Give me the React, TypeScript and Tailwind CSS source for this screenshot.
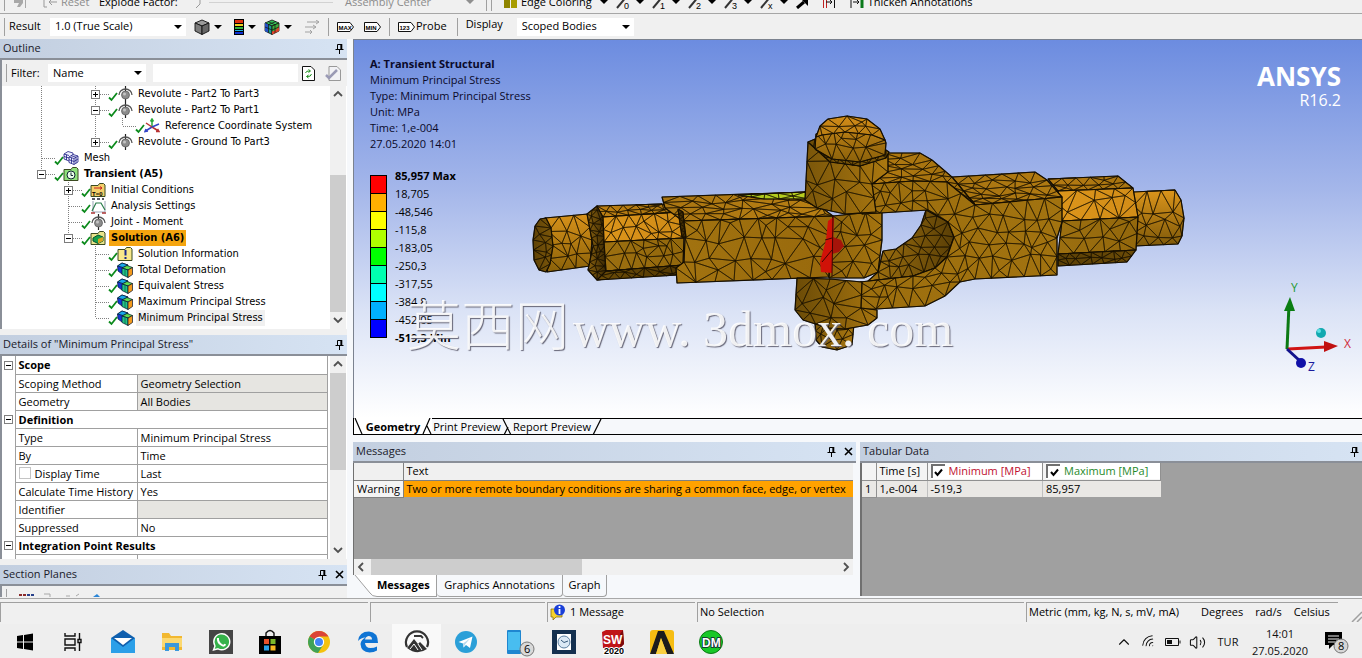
import type { ReactNode } from 'react';
import { ChevronUp, Volume2, Wifi } from 'lucide-react';

type Pt = [number, number];

interface Face {
  pts: Pt[];
  from: string;
  to: string;
  vertical?: boolean;
  step: number;
  flat?: number;
}

// ---------- mesh drawing ----------

function makeRandom(seed: number) {
  let s = seed;
  return () => {
    s = (s * 1664525 + 1013904223) % 4294967296;
    return s / 4294967296;
  };
}

function inside([x, y]: Pt, poly: Pt[]) {
  let hit = false;
  for (let i = 0, j = poly.length - 1; i < poly.length; j = i++) {
    const [xi, yi] = poly[i];
    const [xj, yj] = poly[j];
    if (yi > y !== yj > y && x < ((xj - xi) * (y - yi)) / (yj - yi) + xi) hit = !hit;
  }
  return hit;
}

function triangulate(points: Pt[]) {
  const all: Pt[] = [...points, [-9000, -9000], [9000, -9000], [0, 12000]];
  const n = points.length;
  let tris: number[][] = [[n, n + 1, n + 2]];
  const inCircle = (t: number[], p: Pt) => {
    const [a, b, c] = t.map((i) => all[i]);
    const d = 2 * (a[0] * (b[1] - c[1]) + b[0] * (c[1] - a[1]) + c[0] * (a[1] - b[1]));
    if (Math.abs(d) < 1e-9) return false;
    const a2 = a[0] ** 2 + a[1] ** 2;
    const b2 = b[0] ** 2 + b[1] ** 2;
    const c2 = c[0] ** 2 + c[1] ** 2;
    const ux = (a2 * (b[1] - c[1]) + b2 * (c[1] - a[1]) + c2 * (a[1] - b[1])) / d;
    const uy = (a2 * (c[0] - b[0]) + b2 * (a[0] - c[0]) + c2 * (b[0] - a[0])) / d;
    return Math.hypot(p[0] - ux, p[1] - uy) < Math.hypot(a[0] - ux, a[1] - uy);
  };
  for (let i = 0; i < n; i++) {
    const bad = tris.filter((t) => inCircle(t, all[i]));
    const edges = new Map<string, number[]>();
    bad.forEach((t) =>
      [[t[0], t[1]], [t[1], t[2]], [t[2], t[0]]].forEach((e) => {
        const key = `${Math.min(e[0], e[1])}-${Math.max(e[0], e[1])}`;
        if (edges.has(key)) edges.delete(key);
        else edges.set(key, e);
      }),
    );
    tris = tris.filter((t) => !bad.includes(t));
    edges.forEach((e) => tris.push([e[0], e[1], i]));
  }
  return tris.filter((t) => t.every((i) => i < n));
}

function meshPath(face: Face, seed: number) {
  const rnd = makeRandom(seed * 977 + 31);
  const k = face.flat ?? 1;
  const poly = face.pts.map(([x, y]) => [x - 850, (y - 230) * k] as Pt);
  const step = face.step;
  const pts: Pt[] = [];
  poly.forEach((a, i) => {
    const b = poly[(i + 1) % poly.length];
    const parts = Math.max(1, Math.round(Math.hypot(b[0] - a[0], b[1] - a[1]) / step));
    for (let q = 0; q < parts; q++) {
      const t = q / parts;
      pts.push([a[0] + (b[0] - a[0]) * t + rnd() * 0.02, a[1] + (b[1] - a[1]) * t + rnd() * 0.02]);
    }
  });
  const xs = poly.map((p) => p[0]);
  const ys = poly.map((p) => p[1]);
  const edgeCount = pts.length;
  let row = 0;
  for (let y = Math.min(...ys) + step / 2; y < Math.max(...ys); y += step * 0.87, row++) {
    for (let x = Math.min(...xs) + (row % 2) * step * 0.5; x < Math.max(...xs); x += step) {
      const p: Pt = [x + (rnd() - 0.5) * step * 0.6, y + (rnd() - 0.5) * step * 0.6];
      const clear = pts.slice(0, edgeCount).every((e) => Math.hypot(e[0] - p[0], e[1] - p[1]) > step * 0.5);
      if (clear && inside(p, poly)) pts.push(p);
    }
  }
  return triangulate(pts)
    .filter((t) => inside([(pts[t[0]][0] + pts[t[1]][0] + pts[t[2]][0]) / 3, (pts[t[0]][1] + pts[t[1]][1] + pts[t[2]][1]) / 3], poly))
    .map((t) => `M${t.map((i) => `${(pts[i][0] + 850).toFixed(1)} ${(pts[i][1] / k + 230).toFixed(1)}`).join('L')}Z`)
    .join('');
}

const faces: Face[] = [
  // left shaft
  { pts: [[545, 218], [588, 214], [592, 240], [590, 266], [547, 272], [552, 245]], from: '#d8921a', to: '#8a6109', vertical: true, step: 14 },
  { pts: [[540, 219], [546, 218], [551, 228], [553, 246], [550, 264], [546, 272], [539, 270], [534, 260], [533, 240], [535, 226]], from: '#5e4207', to: '#7c570a', step: 10 },
  { pts: [[587, 214], [597, 206], [604, 214], [606, 244], [606, 279], [597, 280], [588, 270], [593, 246]], from: '#8d6410', to: '#3a2803', step: 8 },
  { pts: [[597, 206], [662, 204], [680, 212], [603, 217]], from: '#bd7f13', to: '#a87410', step: 12, flat: 2.4 },
  { pts: [[603, 217], [680, 212], [684, 238], [604, 242]], from: '#dc951b', to: '#cf8b17', step: 13 },
  { pts: [[604, 242], [684, 238], [683, 265], [606, 271]], from: '#9c6f10', to: '#93680c', step: 13 },
  { pts: [[606, 271], [683, 265], [678, 275], [597, 280]], from: '#6b4b07', to: '#513804', step: 12, flat: 2 },
  { pts: [[662, 197], [805, 192], [822, 208], [833, 216], [683, 221], [665, 208]], from: '#a97512', to: '#b98014', step: 19, flat: 2.6 },
  { pts: [[738, 195], [805, 192], [809, 199], [764, 199]], from: '#a9c51c', to: '#b9cf20', step: 14, flat: 2.4 },
  { pts: [[683, 221], [833, 216], [829, 277], [677, 283], [676, 268], [684, 262], [685, 238]], from: '#a27310', to: '#98690c', step: 19 },
  { pts: [[678, 209], [683, 212], [684, 222], [686, 237], [682, 237], [680, 224]], from: '#4a3403', to: '#3b2804', step: 6 },
  // right shaft
  { pts: [[1133, 192], [1175, 190], [1181, 200], [1184, 218], [1182, 236], [1178, 244], [1135, 246]], from: '#dc951b', to: '#7e590a', vertical: true, step: 15 },
  { pts: [[1048, 179], [1118, 176], [1133, 188], [1058, 191]], from: '#b57b13', to: '#a77310', step: 14, flat: 2.4 },
  { pts: [[1058, 191], [1133, 188], [1138, 217], [1062, 221]], from: '#dc951b', to: '#d28d18', step: 17 },
  { pts: [[1062, 221], [1138, 217], [1136, 250], [1058, 254]], from: '#9c6f10', to: '#93680c', step: 17 },
  { pts: [[1058, 254], [1136, 250], [1127, 262], [1058, 266]], from: '#5b4006', to: '#6b4b07', step: 12, flat: 2 },
  { pts: [[952, 177], [1035, 172], [1047, 180], [1062, 197], [975, 205]], from: '#a97512', to: '#b07a12', step: 17, flat: 2.4 },
  // fork
  { pts: [[833, 216], [882, 211], [882, 240], [878, 272], [864, 278], [829, 278]], from: '#8f650c', to: '#a5740f', step: 16 },
  { pts: [[926, 210], [948, 222], [954, 237], [947, 257], [935, 268], [913, 276], [868, 281], [878, 272], [883, 251], [896, 249], [912, 238], [921, 225]], from: '#a27310', to: '#5a3f06', step: 12 },
  { pts: [[884, 153], [920, 153], [932, 160], [952, 177], [975, 205], [947, 182], [913, 181], [873, 184], [886, 172]], from: '#b17a12', to: '#a06f0e', step: 16, flat: 2.2 },
  {
    pts: [[870, 184], [913, 181], [947, 182], [975, 205], [1062, 197], [1062, 222], [1057, 238], [1057, 275], [975, 279], [960, 282], [945, 296], [925, 306], [860, 310],
      [860, 282], [913, 276], [935, 268], [947, 257], [954, 237], [948, 222], [928, 210], [880, 213], [862, 214]],
    from: '#9c6e0e', to: '#a27310', step: 16,
  },
  // bosses
  { pts: [[815, 322], [854, 324], [852, 345], [837, 350], [822, 347], [816, 340]], from: '#7e590a', to: '#a87711', step: 11 },
  { pts: [[797, 278], [830, 279], [862, 282], [861, 308], [877, 310], [877, 318], [868, 325], [845, 329], [828, 328], [803, 320], [795, 310]], from: '#6b4b07', to: '#a5740f', step: 17 },
  { pts: [[808, 142], [830, 161], [860, 166], [888, 155], [888, 172], [872, 184], [876, 212], [845, 214], [817, 208], [805, 200]], from: '#7a560a', to: '#ab7810', step: 17 },
  { pts: [[808, 142], [815, 139], [816, 150], [832, 158], [860, 161], [886, 150], [889, 152], [886, 158], [860, 166], [830, 162]], from: '#6b4b07', to: '#7e590a', step: 8 },
  { pts: [[816, 134], [822, 132], [845, 129], [872, 131], [885, 140], [886, 143], [885, 155], [860, 162], [832, 159], [815, 149]], from: '#b87d14', to: '#8c620b', vertical: true, step: 14 },
  { pts: [[828, 119], [847, 116], [867, 119], [880, 129], [885, 140], [872, 135], [845, 132], [822, 135], [816, 137], [820, 126]], from: '#d08b18', to: '#b57b13', vertical: true, step: 14, flat: 1.6 },
];

const faceOutline = (pts: Pt[]) => pts.map((p) => p.join(',')).join(' ');

function Model() {
  return (
    <svg viewBox="530 110 660 245" className="absolute left-[176px] top-[70px] h-[245px] w-[660px]" aria-label="Meshed universal joint">
      <defs>
        {faces.map((f, i) => (
          <linearGradient key={i} id={`face${i}`} x1="0" y1="0" x2={f.vertical ? 0 : 1} y2={f.vertical ? 1 : 0}>
            <stop offset="0" stopColor={f.from} />
            <stop offset="1" stopColor={f.to} />
          </linearGradient>
        ))}
      </defs>
      {faces.map((f, i) => (
        <g key={i} strokeLinejoin="round">
          <polygon points={faceOutline(f.pts)} fill={`url(#face${i})`} stroke="#120c00" strokeWidth="1.2" />
          <path d={meshPath(f, i + 1)} fill="none" stroke="#1a1100" strokeWidth="0.6" />
        </g>
      ))}
      <path d="M828 221 834 217 832 273 821 272 820 262 826 240Z" fill="#d01208" />
      <path d="M833 237 841 240 844 246 839 252 832 254Z" fill="#a5140a" />
      <path d="M833 216 832 276M825 240 832 238M822 262 832 250" stroke="#3a0602" strokeWidth="1" fill="none" />
    </svg>
  );
}

// ---------- small icons ----------

const Caret = () => (
  <svg viewBox="0 0 8 4" className="h-1 w-2 shrink-0">
    <path d="M0 0H8L4 4Z" fill="#000" />
  </svg>
);

const PinIcon = () => (
  <svg viewBox="0 0 9 11" className="h-[11px] w-[9px]" fill="none" stroke="#000">
    <path d="M2.5 6V1.5H6V6M0.5 6.5H8.5M4.5 7V11" />
    <path d="M6.5 1V6" strokeWidth="1.6" />
  </svg>
);

const CloseIcon = () => (
  <svg viewBox="0 0 9 9" className="h-[9px] w-[9px]" stroke="#000" strokeWidth="1.6">
    <path d="M1 1 8 8M8 1 1 8" />
  </svg>
);

function Arrow({ dir }: { dir: 'up' | 'down' | 'left' | 'right' }) {
  const d = { up: 'M1 6 5 2 9 6', down: 'M1 3 5 7 9 3', left: 'M6 1 2 5 6 9', right: 'M4 1 8 5 4 9' }[dir];
  return (
    <svg viewBox="0 0 10 10" className="h-2.5 w-2.5" fill="none" stroke="#505050" strokeWidth="1.8">
      <path d={d} />
    </svg>
  );
}

const Check = () => (
  <svg viewBox="0 0 8 16" className="h-4 w-2 overflow-visible" fill="none" stroke="#0c8a1c" strokeWidth="1.8">
    <path d="M0 11.5 2.5 14 8 7" />
  </svg>
);

function JointIcon() {
  return (
    <svg viewBox="0 0 16 16" className="h-4 w-4 overflow-visible">
      <path d="M8.500 0V16" stroke="#222" strokeWidth="1.2" />
      <path d="M2 9A6.500 6 0 0 1 15 9" fill="none" stroke="#555" strokeWidth="1.3" />
      <circle cx="8.500" cy="9" r="4" fill="#8c8c8c" stroke="#555" strokeWidth="0.7" />
      <circle cx="7.500" cy="8" r="1.500" fill="#c4c4c4" />
    </svg>
  );
}

function AxesIcon() {
  return (
    <svg viewBox="0 0 16 16" className="h-4 w-4" fill="none" strokeWidth="1.5">
      <path d="M8 9V1M6.500 3.500 8 1 9.500 3.500" stroke="#28a83c" />
      <path d="M8 9 1.500 13M4 13 1 13.500 2 11" stroke="#3346c8" />
      <path d="M8 9 14.500 13M12 13.500 15 13.500 13.500 11M8 9 2 5" stroke="#b83232" />
      <path d="M8 9 15 6" stroke="#3346c8" />
    </svg>
  );
}

function MeshIcon() {
  return (
    <svg viewBox="0 0 16 16" className="h-4 w-4" fill="#eef0ff" stroke="#1c1c84" strokeWidth="0.8">
      <path d="M1 4 5 1.500 10 3V9L6 11 1 9Z" />
      <path d="M6 7 10 4.500 15 6V12L11 14.500 6 12.500Z" />
      <path d="M6 7 11 8.500 15 6M11 8.500V14.500M8.500 7.700V13.500M6 9.700 11 11.500 15 9M8 5.700 13 7.200M1 4 6 5.500M3.500 4.700V10M1 6.500 6 8M13 7.300V13.200" fill="none" />
    </svg>
  );
}

function FolderIcon({ fill, children }: { fill: string; children: ReactNode }) {
  return (
    <svg viewBox="0 0 16 16" className="h-4 w-4">
      <path d="M1 3.500H8L9.500 1.500H13.500L15 3V14.500H1Z" fill={fill} stroke="#3b4a20" strokeWidth="1" />
      {children}
    </svg>
  );
}

function CurveIcon() {
  return (
    <svg viewBox="0 0 16 16" className="h-4 w-4" fill="none">
      <path d="M2 1H14" stroke="#223" strokeWidth="1.600" strokeDasharray="3 2" />
      <path d="M3 3V14H15M15 3V14" stroke="#9aa4b4" />
      <path d="M2 13 6 5H11L15 12" stroke="#2b7c4b" strokeWidth="1.200" />
      <path d="M1 15H5M12 15H16" stroke="#a33" strokeWidth="1.500" />
    </svg>
  );
}

function ResultIcon() {
  return (
    <svg viewBox="0 0 16 16" className="h-4 w-4" stroke="#06122e" strokeWidth="0.700">
      <path d="M0.500 4 5 1 11 3V9L5 12 1 9Z" fill="#1238d8" />
      <path d="M5 1 11 3 6 5.500 0.500 4Z" fill="#18a8e8" />
      <path d="M5 6 10 3.500 15.500 5.500 11 8Z" fill="#5fdc50" />
      <path d="M5 6 11 8V15.500L5 12.500Z" fill="#22c48a" />
      <path d="M11 8 15.500 5.500V12.500L11 15.500Z" fill="#f39a1c" />
      <path d="M8 7V14" stroke="#0a5a3a" />
    </svg>
  );
}

function CubeIcon({ colors }: { colors: [string, string, string] }) {
  return (
    <svg viewBox="0 0 16 16" className="h-4 w-4" stroke="#111" strokeWidth="0.900">
      <path d="M1 4 8 1 15 4 8 7Z" fill={colors[0]} />
      <path d="M1 4 8 7V15.500L1 12Z" fill={colors[1]} />
      <path d="M8 7 15 4V12L8 15.500Z" fill={colors[2]} />
    </svg>
  );
}

function ContourCubeIcon() {
  return (
    <svg viewBox="0 0 16 16" className="h-4 w-4" stroke="#111" strokeWidth="0.800">
      <path d="M1 4 8 1 15 4 8 7Z" fill="#35c25a" />
      <path d="M1 4 8 7V15.500L1 12Z" fill="#1b9a8e" />
      <path d="M8 7 15 4V12L8 15.500Z" fill="#3fae3a" />
      <path d="M15 7V12L8 15.500V12.500Q12 12 15 7Z" fill="#e0402a" stroke="none" />
      <path d="M1 4 4 5.500V13.500L1 12Z" fill="#2450c8" stroke="none" />
      <path d="M4 2.500 11 5.800V14M12 2.500 4.500 5.500V13.800M1 8 8 11 15 8" fill="none" strokeWidth="0.700" />
    </svg>
  );
}

function TagIcon({ text }: { text: string }) {
  return (
    <svg viewBox="0 0 17 10" className="h-2.5 w-[17px]">
      <path d="M0.500 0.500H13L16.500 5 13 9.500H0.500Z" fill="#fff" stroke="#111" />
      <text x="1.500" y="7.500" fontSize="6" fontFamily="Liberation Sans" fontWeight="bold">
        {text}
      </text>
    </svg>
  );
}

// ---------- tree ----------

type Guide = 'none' | 'line' | 'tee' | 'elbow' | 'plus' | 'plusEnd' | 'minus' | 'minusEnd';

function GuideCell({ kind }: { kind: Guide }) {
  const box = kind.startsWith('plus') || kind.startsWith('minus');
  const down = kind === 'line' || kind === 'tee' || kind === 'plus' || kind === 'minus';
  return (
    <svg viewBox="0 0 27 16" className="h-4 w-[27px] shrink-0" fill="none" shapeRendering="crispEdges">
      <g stroke="#808080" strokeDasharray="1 1">
        {kind !== 'none' && <path d="M13.500 0V8" />}
        {down && <path d="M13.500 8V16" />}
        {kind !== 'none' && kind !== 'line' && <path d="M14 8.500H27" />}
      </g>
      {box && (
        <>
          <rect x="9.500" y="4.500" width="8" height="8" fill="#fff" stroke="#7c7c7c" />
          <path d={kind.startsWith('plus') ? 'M11 8.500H16M13.500 6V11' : 'M11 8.500H16'} stroke="#000" />
        </>
      )}
    </svg>
  );
}

const clock = (
  <>
    <circle cx="8" cy="9" r="4" fill="#eaffea" stroke="#123" />
    <path d="M8 6.500V9.500H10" fill="none" stroke="#123" />
  </>
);
const tZero = (
  <>
    <path d="M4 6H12M10 4.500 12 6 10 7.500" stroke="#c22" fill="none" />
    <text x="2" y="13.500" fontSize="6" fontWeight="bold" fontFamily="Liberation Sans">T=0</text>
  </>
);
const solutionMark = (
  <>
    <path d="M3 8 8 5 13 7V11L8 13.500 3 11Z" fill="#17a04a" stroke="#053" />
    <path d="M8 9 13 7V11L8 13.500Z" fill="#d9a520" />
  </>
);
const infoMark = <path d="M8.500 4V9.500M8.500 11V13" stroke="#1a2a8a" strokeWidth="2" />;

interface TreeRow {
  guides: Guide[];
  icon: ReactNode;
  label: string;
  style?: string;
}

const tree: TreeRow[] = [
  { guides: ['line', 'none', 'plus'], icon: <JointIcon />, label: 'Revolute - Part2 To Part3' },
  { guides: ['line', 'none', 'minus'], icon: <JointIcon />, label: 'Revolute - Part2 To Part1' },
  { guides: ['line', 'none', 'line', 'elbow'], icon: <AxesIcon />, label: 'Reference Coordinate System' },
  { guides: ['line', 'none', 'plusEnd'], icon: <JointIcon />, label: 'Revolute - Ground To Part3' },
  { guides: ['tee'], icon: <MeshIcon />, label: 'Mesh' },
  { guides: ['minusEnd'], icon: <FolderIcon fill="#8fe07c">{clock}</FolderIcon>, label: 'Transient (A5)', style: 'font-bold' },
  { guides: ['none', 'plus'], icon: <FolderIcon fill="#f3cf6a">{tZero}</FolderIcon>, label: 'Initial Conditions' },
  { guides: ['none', 'tee'], icon: <CurveIcon />, label: 'Analysis Settings' },
  { guides: ['none', 'tee'], icon: <JointIcon />, label: 'Joint - Moment' },
  { guides: ['none', 'minusEnd'], icon: <FolderIcon fill="#e9e48a">{solutionMark}</FolderIcon>, label: 'Solution (A6)', style: 'font-bold bg-[#f5a50f]' },
  { guides: ['none', 'none', 'tee'], icon: <FolderIcon fill="#f8e88a">{infoMark}</FolderIcon>, label: 'Solution Information' },
  { guides: ['none', 'none', 'tee'], icon: <ResultIcon />, label: 'Total Deformation' },
  { guides: ['none', 'none', 'tee'], icon: <ResultIcon />, label: 'Equivalent Stress' },
  { guides: ['none', 'none', 'tee'], icon: <ResultIcon />, label: 'Maximum Principal Stress' },
  { guides: ['none', 'none', 'elbow'], icon: <ResultIcon />, label: 'Minimum Principal Stress', style: 'bg-[#f0f0f0]' },
];

// ---------- panels ----------

function TitleBar({ title, closable }: { title: string; closable?: boolean }) {
  return (
    <div className="flex h-[21px] shrink-0 items-center gap-2 border-b-2 border-[#8a8f98] bg-gradient-to-r from-[#c3cfe0] to-[#d6e3f3] px-[3px]">
      <h2 className="flex-1 truncate text-[11px] text-[#1a1a2a]">{title}</h2>
      <button aria-label={`Pin ${title}`}><PinIcon /></button>
      {closable && <button aria-label={`Close ${title}`}><CloseIcon /></button>}
    </div>
  );
}

function SelectBox({ label, value, className }: { label: string; value: string; className: string }) {
  return (
    <div className={`relative flex h-[18px] items-center bg-white ${className}`}>
      <select aria-label={label} className="h-full w-full appearance-none bg-transparent pl-[5px] text-[11px]">
        <option>{value}</option>
      </select>
      <span className="pointer-events-none absolute right-1"><Caret /></span>
    </div>
  );
}

const Separator = () => <div className="h-[18px] w-px shrink-0 bg-[#a0a0a0]" />;

function TopToolbar() {
  return (
    <div className="flex h-[14px] shrink-0 items-end overflow-hidden border-b border-[#a6a6a6]">
      <div className="flex h-[22px] w-full shrink-0 items-center">
        <div className="flex w-[486px] shrink-0 items-center pl-1 text-[#8c8c8c]">
          <Separator />
          <svg viewBox="0 0 14 14" className="ml-2 h-[14px] w-[14px]" fill="#a8a8a8">
            <path d="M1 3H10V8L7 12H4L6 8H1ZM12 1V13H13V1Z" />
          </svg>
          <button className="ml-4 flex w-14 items-center gap-1 whitespace-nowrap">
            <svg viewBox="0 0 14 12" className="h-3 w-[14px] shrink-0" fill="none" stroke="#999">
              <path d="M4 1H1V11H4M14 6H6M9 3 6 6 9 9" />
            </svg>
            Reset
          </button>
          <span className="w-[94px] text-black">Explode Factor:</span>
          <svg viewBox="0 0 8 14" className="h-[14px] w-2" fill="none" stroke="#999">
            <path d="M7 1V9L3 13" />
          </svg>
          <div className="ml-2 h-px w-[124px] bg-[#d2d2d2]" />
          <span className="ml-3 flex-1 whitespace-nowrap">Assembly Center</span>
          <span className="mr-3 opacity-40"><Caret /></span>
        </div>
        <Separator />
        <div className="ml-1"><Separator /></div>
        <button className="ml-3 flex items-center gap-1 whitespace-nowrap">
          <span className="h-3 w-[6px] bg-[#8f8500]" />
          <span className="-ml-[3px] h-3 w-[6px] bg-[#a79c00]" />
          Edge Coloring
        </button>
        <div className="ml-2"><Caret /></div>
        {['0', '1', '2', '3', 'x'].map((n) => (
          <button key={n} aria-label={`Edge style ${n}`} className="ml-2 flex w-7 items-center gap-1">
            <svg viewBox="0 0 16 16" className="h-4 w-4">
              <path d="M1 14 11 2" stroke="#333" strokeWidth="2" />
              <text x="8" y="15" fontSize="9" fontFamily="Liberation Sans">{n}</text>
            </svg>
            <Caret />
          </button>
        ))}
        <svg viewBox="0 0 14 14" className="ml-2 h-[14px] w-[14px]">
          <path d="M1 13 8 7" stroke="#000" strokeWidth="3" />
          <path d="M4 3H12V11Z" fill="#000" />
        </svg>
        <svg viewBox="0 0 14 14" className="ml-3 h-[14px] w-[14px]" fill="none" stroke="#c02020">
          <path d="M1.500 1V13M4.500 1V13" />
          <path d="M4 7H10M8 5 10 7 8 9M12.500 1V13" stroke="#111" />
        </svg>
        <button className="ml-[14px] flex items-center gap-1 whitespace-nowrap">
          <svg viewBox="0 0 14 14" className="h-[14px] w-[14px]" fill="none" stroke="#111">
            <path d="M1 1V13M3 7H9M7 5 9 7 7 9" />
            <path d="M12 1V13" stroke="#0a7a1a" strokeWidth="3" />
          </svg>
          Thicken Annotations
        </button>
      </div>
    </div>
  );
}

function ResultToolbar() {
  return (
    <div className="flex h-[25px] shrink-0 items-center pl-1">
      <Separator />
      <span className="ml-1 w-[39px]">Result</span>
      <SelectBox label="Result scale" value="1.0 (True Scale)" className="ml-[2px] w-[136px]" />
      <div className="ml-2 flex items-center gap-1">
        <CubeIcon colors={['#9a9a9a', '#7c7c7c', '#666']} />
        <Caret />
        <svg viewBox="0 0 10 16" className="ml-2 h-4 w-2.5">
          <rect width="10" height="16" fill="#000" />
          <path d="M1 1H9V4H1Z" fill="#e03010" />
          <path d="M1 5H9V7H1Z" fill="#f0d020" />
          <path d="M1 8H9V10H1Z" fill="#30b040" />
          <path d="M1 11H9V12H1Z" fill="#20b0e0" />
          <path d="M1 13H9V15H1Z" fill="#1030d0" />
        </svg>
        <Caret />
        <div className="ml-1"><ContourCubeIcon /></div>
        <Caret />
        <svg viewBox="0 0 16 14" className="ml-2 h-[14px] w-4" fill="none" stroke="#a2a2a2">
          <path d="M3 2H15M12 0 15 2 12 4M1 7H12M9 5 12 7 9 9M1 12H8M6 10 8 12 6 14" />
        </svg>
      </div>
      <div className="ml-2"><Separator /></div>
      <button aria-label="Max" className="ml-2"><TagIcon text="MAX" /></button>
      <button aria-label="Min" className="ml-2.5"><TagIcon text="MIN" /></button>
      <div className="ml-2"><Separator /></div>
      <button className="ml-2 flex items-center gap-px"><TagIcon text="123" />Probe</button>
      <div className="ml-2.5"><Separator /></div>
      <span className="ml-2 w-[51px] pb-1">Display</span>
      <SelectBox label="Display" value="Scoped Bodies" className="w-[117px]" />
    </div>
  );
}

function VerticalScroll({ thumb }: { thumb: string }) {
  return (
    <div className="relative mr-px flex w-4 shrink-0 flex-col items-center justify-between bg-[#f0f0f0] py-1">
      <Arrow dir="up" />
      <div className={`absolute inset-x-0 bg-[#cdcdcd] ${thumb}`} />
      <Arrow dir="down" />
    </div>
  );
}

function OutlinePanel() {
  return (
    <section>
      <TitleBar title="Outline" />
      <div className="border-l-2 border-[#8a8f98]">
        <div className="flex h-[26px] items-center pl-1 pr-[6px]">
          <Separator />
          <label htmlFor="filter" className="ml-1 w-[37px]">Filter:</label>
          <SelectBox label="Filter by" value="Name" className="w-[98px]" />
          <input id="filter" className="ml-[7px] h-[18px] min-w-0 flex-1 bg-white" />
          <button aria-label="Refresh" className="ml-1">
            <svg viewBox="0 0 13 15" className="h-[15px] w-[13px]" fill="#fff" stroke="#111">
              <path d="M0.500 0.500H9L12.500 4V14.500H0.500Z" />
              <path d="M3.500 7Q4 4.500 8 5M6.500 3.500 8.500 5 6.500 6.500M9.500 8Q9 11 5 10.500M6.500 9 4.500 10.500 6.500 12" fill="none" stroke="#1b8f1b" />
            </svg>
          </button>
          <button aria-label="Clear filter" className="ml-2.5">
            <svg viewBox="0 0 16 15" className="h-[15px] w-4" fill="#f2f2f5" stroke="#999">
              <path d="M4 0.500H12L15.500 4V14.500H4Z" />
              <path d="M1 9 4 12 12 4" fill="none" stroke="#9a9ab5" strokeWidth="2.500" />
            </svg>
          </button>
        </div>
        <div className="flex h-[243px] bg-white">
          <ul className="flex-1 overflow-hidden pl-[26px] font-['DejaVu_Sans_Condensed','Open_Sans',sans-serif] text-[11px]">
            {tree.map((row) => (
              <li key={row.label} className="flex h-4 items-center whitespace-nowrap">
                {row.guides.map((g, i) => <GuideCell key={i} kind={g} />)}
                <Check />
                {row.icon}
                <span className={`ml-[3px] px-[2px] leading-4 ${row.style ?? ''}`}>{row.label}</span>
              </li>
            ))}
          </ul>
          <VerticalScroll thumb="top-[89px] h-[137px]" />
        </div>
      </div>
    </section>
  );
}

const details: { name: string; value?: string; head?: boolean; gray?: boolean; check?: boolean }[] = [
  { name: 'Scope', head: true },
  { name: 'Scoping Method', value: 'Geometry Selection', gray: true },
  { name: 'Geometry', value: 'All Bodies', gray: true },
  { name: 'Definition', head: true },
  { name: 'Type', value: 'Minimum Principal Stress' },
  { name: 'By', value: 'Time' },
  { name: 'Display Time', value: 'Last', check: true },
  { name: 'Calculate Time History', value: 'Yes' },
  { name: 'Identifier', value: '', gray: true },
  { name: 'Suppressed', value: 'No' },
  { name: 'Integration Point Results', head: true },
];

function DetailsPanel() {
  return (
    <section>
      <TitleBar title={'Details of "Minimum Principal Stress"'} />
      <div className="flex h-[203px] overflow-hidden border-l-2 border-[#8a8f98] bg-white">
        <div className="mr-[2px] flex-1 overflow-hidden border-r border-[#a0a0a0]">
          <table className="w-full table-fixed border-collapse whitespace-nowrap">
            <colgroup>
              <col className="w-[13px]" />
              <col className="w-[122px]" />
              <col />
            </colgroup>
            <tbody>
              {details.map((d) => (
                <tr key={d.name} className="h-[18px]">
                  <td className="border-r border-[#a0a0a0] p-0">
                    {d.head && (
                      <svg viewBox="0 0 9 9" className="ml-[2px] h-[9px] w-[9px]" fill="#fff" shapeRendering="crispEdges">
                        <rect x="0.500" y="0.500" width="8" height="8" stroke="#808080" />
                        <path d="M2 4.500H7" stroke="#000" />
                      </svg>
                    )}
                  </td>
                  {d.head ? (
                    <th colSpan={2} className="border-b border-[#a0a0a0] p-0 pl-[3px] text-left font-bold leading-[17px]">{d.name}</th>
                  ) : (
                    <>
                      <td className="border-b border-r border-[#a0a0a0] p-0 pl-[3px] leading-[17px]">
                        {d.check ? (
                          <label className="flex items-center gap-1">
                            <input type="checkbox" className="h-3 w-3 appearance-none border border-[#c4c4c4] bg-white" />
                            {d.name}
                          </label>
                        ) : d.name}
                      </td>
                      <td className={`border-b border-[#a0a0a0] p-0 pl-[3px] leading-[17px] ${d.gray ? 'bg-[#e6e5e1]' : ''}`}>{d.value}</td>
                    </>
                  )}
                </tr>
              ))}
              <tr className="h-[18px]">
                <td className="border-r border-[#a0a0a0]" />
                <td className="border-r border-[#a0a0a0]" />
                <td />
              </tr>
            </tbody>
          </table>
        </div>
        <VerticalScroll thumb="top-[17px] h-[97px]" />
      </div>
    </section>
  );
}

function SectionPlanes() {
  return (
    <section>
      <TitleBar title="Section Planes" closable />
      <div className="flex h-[11px] items-end gap-3 overflow-hidden border-l-2 border-[#8a8f98] pl-1">
        <div className="h-2 w-px bg-[#a0a0a0]" />
        <svg viewBox="0 0 90 5" className="h-[5px] w-[90px]">
          <path d="M0 3H8" stroke="#8b2b2b" strokeWidth="2" strokeDasharray="3 1" />
          <path d="M8 3H15" stroke="#28418b" strokeWidth="2" strokeDasharray="3 1" />
          <path d="M25 2H31V5M47 4H51M57 4 60 2" stroke="#a8a8a8" fill="none" />
          <path d="M74 5 78 2 81 5Z" fill="#2b86d8" />
        </svg>
      </div>
    </section>
  );
}

// ---------- viewport ----------

const legendColors = ['bg-[#ff0000]', 'bg-[#ffb000]', 'bg-[#ffff00]', 'bg-[#b0ff00]', 'bg-[#00ff00]', 'bg-[#00ffb0]', 'bg-[#00ffff]', 'bg-[#00b0ff]', 'bg-[#0000ff]'];
const legendLabels = ['85,957 Max', '18,705', '-48,546', '-115,8', '-183,05', '-250,3', '-317,55', '-384,8', '-452,05', '-519,3 Min'];

function Triad() {
  return (
    <svg viewBox="0 0 80 100" className="absolute bottom-[37px] right-2 h-[100px] w-[80px]" fontFamily="Open Sans" fontSize="12">
      <path d="M13 68 15 24" stroke="#0c7a14" strokeWidth="3" />
      <path d="M10 30 16 16 21 30Z" fill="#0a7d12" />
      <path d="M14 68 52 66" stroke="#d01414" strokeWidth="3" />
      <path d="M50 60 64 65 50 71Z" fill="#c01010" />
      <path d="M13 68 26 80" stroke="#12128c" strokeWidth="3" />
      <circle cx="27" cy="82" r="5" fill="#1010a8" />
      <circle cx="47" cy="52" r="5" fill="#12a9b0" />
      <circle cx="45" cy="50" r="2" fill="#5fe0e4" />
      <text x="17" y="11" fill="#1f9a33">Y</text>
      <text x="70" y="67" fill="#d02a3a">X</text>
      <text x="34" y="90" fill="#1a1a9c">Z</text>
    </svg>
  );
}

function Viewport() {
  return (
    <div className="relative h-[379px] shrink-0 overflow-hidden border-l border-t border-[#7b828f] bg-[linear-gradient(#6c8ce0,#a5b7ea_40%,#dbe3f6_72%,#ffffff)]">
      <div className="px-4 pt-4 leading-4 text-[#0a0a2a]">
        <p className="font-bold">A: Transient Structural</p>
        <p>Minimum Principal Stress</p>
        <p>Type: Minimum Principal Stress</p>
        <p>Unit: MPa</p>
        <p>Time: 1,e-004</p>
        <p>27.05.2020 14:01</p>
      </div>
      <div className="mt-[15px] flex items-start px-4">
        <div className="mt-2 w-[17px] border-x border-t border-black">
          {legendColors.map((c) => <div key={c} className={`h-[18px] border-b border-black ${c}`} />)}
        </div>
        <ul className="ml-2 leading-[18px]">
          {legendLabels.map((l, i) => <li key={l} className={i === 0 || i === 9 ? 'font-bold' : ''}>{l}</li>)}
        </ul>
      </div>
      <Model />
      <div className="absolute right-[21px] top-[20px] text-right font-['Open_Sans',sans-serif] text-white">
        <p className="text-[26px] font-bold leading-8">ANSYS</p>
        <p className="text-base leading-4">R16.2</p>
      </div>
      <Triad />
      <p className="absolute left-[53px] top-[252px] flex items-baseline whitespace-pre text-white/90 [text-shadow:1px_1px_1px_#667]">
        <span className="font-['Noto_Sans_CJK_SC',sans-serif] text-[54px] font-light leading-[60px]">莫西网</span>
        <span className="ml-1 font-['Liberation_Serif',serif] text-[50px]">www. 3dmox. com</span>
      </p>
    </div>
  );
}

function Slash({ d }: { d: string }) {
  return (
    <svg viewBox="0 0 10 16" className="h-4 w-2.5 shrink-0" fill="none" stroke="#000" strokeWidth="1.200">
      <path d={d} />
    </svg>
  );
}

function ViewTabs() {
  return (
    <div className="flex h-[17px] shrink-0 items-stretch border-b border-l border-black">
      <div className="bg-white"><Slash d="M1 0 8 16" /></div>
      <button className="w-[58px] whitespace-nowrap bg-white font-bold leading-[17px]">Geometry</button>
      <div className="bg-white"><Slash d="M1 16 8 0M5 8 9 16" /></div>
      <button className="w-[70px] whitespace-nowrap border-t border-black leading-4">Print Preview</button>
      <div className="border-t border-black"><Slash d="M1 0 9 16M2 16 6 8" /></div>
      <button className="w-20 whitespace-nowrap border-t border-black leading-4">Report Preview</button>
      <div className="border-t border-black"><Slash d="M1 16 9 0" /></div>
      <div className="flex-1 border-t border-black" />
    </div>
  );
}

function MessagesPanel() {
  return (
    <section className="flex w-[503px] shrink-0 flex-col">
      <TitleBar title="Messages" closable />
      <div className="mr-[3px] flex h-[112px] flex-col border-l border-[#707070] bg-[#a0a0a0]">
        <div className="flex-1 overflow-hidden">
          <table className="w-full table-fixed border-collapse whitespace-nowrap text-left">
            <thead>
              <tr className="h-[17px] bg-[#f0f0f0]">
                <th className="w-[49px] border-b border-r border-[#808080] p-0" />
                <th className="border-b border-[#808080] p-0 pl-[3px] font-normal leading-4">Text</th>
              </tr>
            </thead>
            <tbody>
              <tr className="h-[17px]">
                <td className="overflow-hidden border-b border-r border-[#808080] bg-[#f4f4f4] p-0 pl-[3px] leading-4">Warning</td>
                <td className="overflow-hidden bg-[#ffa200] p-0 pl-[3px] leading-4">
                  Two or more remote boundary conditions are sharing a common face, edge, or vertex
                </td>
              </tr>
            </tbody>
          </table>
        </div>
        <div className="flex h-4 items-center bg-[#f0f0f0] px-[3px]">
          <Arrow dir="left" />
          <div className="ml-1 h-4 w-[211px] bg-[#cdcdcd]" />
          <div className="flex-1" />
          <Arrow dir="right" />
        </div>
      </div>
      <div className="flex h-[22px] items-start">
        <svg viewBox="0 0 24 22" className="h-[22px] w-6" fill="#fff" stroke="#a0a0a0">
          <path d="M3 0H24V21Q19 21 17 18Z" stroke="none" />
          <path d="M2 0 17 18Q19 21.500 24 21.500" />
        </svg>
        <button className="h-[22px] w-[60px] border-b border-r border-[#a0a0a0] bg-white text-left font-bold">Messages</button>
        <button className="h-[22px] w-[126px] whitespace-nowrap rounded-b-sm border-b border-r border-[#a0a0a0]">Graphics Annotations</button>
        <button className="h-[22px] w-11 rounded-b-sm border-b border-r border-[#a0a0a0]">Graph</button>
      </div>
    </section>
  );
}

function CheckedHead({ text, color }: { text: string; color: string }) {
  return (
    <label className="flex items-center gap-1 bg-white leading-4">
      <span className="relative flex h-[14px] w-[14px] items-center justify-center border-l-2 border-t-2 border-[#707070] bg-white">
        <input type="checkbox" defaultChecked className="absolute inset-0 appearance-none" />
        <svg viewBox="0 0 9 9" className="pointer-events-none h-[9px] w-[9px]" fill="none" stroke="#000" strokeWidth="2">
          <path d="M1 4 3.500 7 8 1.500" />
        </svg>
      </span>
      <span className={color}>{text}</span>
    </label>
  );
}

function TabularPanel() {
  return (
    <section className="flex min-w-0 flex-1 flex-col">
      <TitleBar title="Tabular Data" />
      <div className="h-[133px] border-l-2 border-[#707070] bg-[#a0a0a0]">
        <table className="w-[299px] table-fixed border-collapse whitespace-nowrap text-left">
          <thead>
            <tr className="h-[17px] bg-[#f4f4f4]">
              <th className="w-[14px] border-b border-r border-[#909090] p-0" />
              <th className="w-[51px] border-b border-r border-[#909090] p-0 pl-[3px] font-normal leading-4">Time [s]</th>
              <th className="border-b border-r border-[#909090] p-0 pl-[3px] font-normal">
                <CheckedHead text="Minimum [MPa]" color="text-[#c01030]" />
              </th>
              <th className="w-[118px] border-b border-r border-[#909090] p-0 pl-[3px] font-normal">
                <CheckedHead text="Maximum [MPa]" color="text-[#1f8a2a]" />
              </th>
            </tr>
          </thead>
          <tbody>
            <tr className="h-[17px] bg-[#eae8e5]">
              <td className="border-b border-r border-[#909090] p-0 pl-[3px] leading-4">1</td>
              <td className="border-r border-[#c0c0c0] p-0 pl-[3px] leading-4">1,e-004</td>
              <td className="border-r border-[#c0c0c0] p-0 pl-[3px] leading-4">-519,3</td>
              <td className="p-0 pl-[3px] leading-4">85,957</td>
            </tr>
          </tbody>
        </table>
      </div>
    </section>
  );
}

// ---------- bottom bars ----------

function StatusBar() {
  const cell = 'flex h-5 items-center border-l border-t border-[#a0a0a0] pl-[2px] whitespace-nowrap';
  return (
    <footer className="flex h-[26px] shrink-0 items-center gap-[2px] border-t border-[#a8a8a8] bg-[#f0f0f0]">
      <div className={`${cell} w-[368px]`} />
      <div className={`${cell} w-[175px]`} />
      <div className={`${cell} w-[148px] gap-1`}>
        <svg viewBox="0 0 16 16" className="h-4 w-4">
          <path d="M1 5H12V13H6L3 16V13H1Z" fill="#f6d32d" stroke="#8a7410" strokeWidth="0.800" />
          <circle cx="9.500" cy="6" r="5.500" fill="#1a3fd8" />
          <path d="M9.500 2V4M9.500 5V10" stroke="#fff" strokeWidth="1.800" />
        </svg>
        1 Message
      </div>
      <div className={`${cell} flex-1`}>No Selection</div>
      <div className={`${cell} w-[312px] gap-3`}>
        <span className="w-[160px]">Metric (mm, kg, N, s, mV, mA)</span>
        <span>Degrees</span>
        <span>rad/s</span>
        <span>Celsius</span>
      </div>
      <svg viewBox="0 0 22 20" className="h-5 w-[22px]" stroke="#a0a0a0" strokeWidth="1.500">
        <path d="M12 20 22 10M17 20 22 15" />
      </svg>
    </footer>
  );
}

const taskIcons: { name: string; art: ReactNode; active?: boolean }[] = [
  { name: 'Start', art: <path d="M4 6 10 5V11.500H4ZM11 5 20 3.500V11.500H11ZM4 12.500H10V19L4 18ZM11 12.500H20V20.500L11 19Z" fill="#000" /> },
  { name: 'Task view', art: <path d="M3 3V6H13V3M3 9H13V15H3ZM3 21V18H13V21M17.500 3V9M17.500 13V21M16 9.500H19V12.500H16Z" fill="none" stroke="#111" strokeWidth="1.400" /> },
  {
    name: 'Mail',
    art: (
      <>
        <path d="M0 8 12 0 24 8V23H0Z" fill="#0f5fae" />
        <path d="M3 8H21L12 15Z" fill="#fff" />
        <path d="M0 8 12 17 24 8V23H0Z" fill="#2b9fe8" />
      </>
    ),
  },
  {
    name: 'File Explorer',
    art: (
      <>
        <path d="M2 3H9L11 6H22V20H2Z" fill="#f2b830" />
        <path d="M2 8H22V17H2Z" fill="#fbd870" />
        <path d="M5 13H19V21H15V17H9V21H5Z" fill="#3b98dc" />
      </>
    ),
  },
  {
    name: 'WhatsApp',
    art: (
      <>
        <path d="M0 0H24V24H0Z" fill="#454545" />
        <path d="M4.500 20 6 16A8 8 0 1 1 9 18.800Z" fill="#35b24a" stroke="#fff" strokeWidth="1.400" />
        <path d="M9 8Q8.500 12 12 14.500T16 14" fill="none" stroke="#fff" strokeWidth="2" />
      </>
    ),
  },
  {
    name: 'Store',
    art: (
      <>
        <path d="M8 6V3Q12-2 16 3V6" fill="none" stroke="#111" strokeWidth="1.400" />
        <path d="M1 6H23V24H1Z" fill="#000" />
        <path d="M6 9H11V14H6Z" fill="#e8502a" />
        <path d="M12.500 9H17.500V14H12.500Z" fill="#7cb82a" />
        <path d="M6 15.500H11V20.500H6Z" fill="#28a0e8" />
        <path d="M12.500 15.500H17.500V20.500H12.500Z" fill="#f8b820" />
      </>
    ),
  },
  {
    name: 'Chrome',
    art: (
      <>
        <circle cx="12" cy="12" r="11" fill="#f4c20d" />
        <path d="M12 12 2.500 6.500A11 11 0 0 1 21.500 6.500H12Z" fill="#db4437" />
        <path d="M12 12 2.500 6.500A11 11 0 0 0 11 23L16.500 14.500Z" fill="#3fa257" />
        <circle cx="12" cy="12" r="5.200" fill="#fff" />
        <circle cx="12" cy="12" r="4" fill="#4285f4" />
      </>
    ),
  },
  {
    name: 'Edge',
    art: (
      <path
        d="M2 11Q3 1.500 13 1.500 22 2 22 13H9Q9.500 18 14.500 18 18 18 21 16.500V20.500Q18 22.500 13.500 22.500 5 22 4.500 14 5 9.500 9.500 7.500 5 7.500 2 11ZM9 9.500H16Q16 6 12.500 6 9.500 6.500 9 9.500Z"
        fill="#0f74d4"
        fillRule="evenodd"
      />
    ),
  },
  {
    name: 'Gallery',
    active: true,
    art: (
      <>
        <path d="M2 17A11 11 0 1 1 22 17" fill="none" stroke="#333" strokeWidth="2.200" />
        <path d="M2 18 9 9 13 14 15 12 22 19Q12 26 2 18Z" fill="#333" />
        <path d="M5 19 9 14 13 20M13 14 17 20" stroke="#fff" fill="none" />
        <path d="M9 6H16L18 8" stroke="#333" strokeWidth="1.800" fill="none" />
      </>
    ),
  },
  {
    name: 'Telegram',
    art: (
      <>
        <circle cx="12" cy="12" r="11" fill="#2b9fd8" />
        <path d="M4.500 12 18.500 6.500 16 18 12 15 9.500 17.500 9 13.500Z" fill="#fff" />
        <path d="M9 13.500 16 8.500 11 14.500 9.500 17.500Z" fill="#b8d8ec" />
      </>
    ),
  },
  {
    name: 'Your Phone',
    art: (
      <>
        <rect x="4" y="0" width="14" height="24" rx="1" fill="#1f86d0" />
        <path d="M5 2H17V20H5Z" fill="#48bdf0" />
        <circle cx="24" cy="19" r="7" fill="#d9d9d9" stroke="#777" />
        <text x="21" y="23" fontSize="11" fontFamily="Open Sans">6</text>
      </>
    ),
  },
  {
    name: 'Clock app',
    art: (
      <>
        <path d="M0 0H24V24H0Z" fill="#14304f" />
        <path d="M5 4H19V20H5Z" fill="#fff" />
        <circle cx="12" cy="12" r="6" fill="#dbe9f5" stroke="#5a7ea0" />
        <path d="M9 10 12 12.500 16 11" fill="none" stroke="#35587a" />
      </>
    ),
  },
  {
    name: 'SolidWorks 2020',
    art: (
      <>
        <path d="M1 2 5 0H22L23 14 19 18H2Z" fill="#c01418" />
        <path d="M19 4 22 0 23 14 19 18Z" fill="#7c0a0c" />
        <text x="2" y="14" fontSize="12" fontWeight="bold" fontFamily="Liberation Sans" fill="#fff">SW</text>
        <text x="3" y="24" fontSize="9" fontWeight="bold" fontFamily="Liberation Sans" fill="#000" stroke="#fff" strokeWidth="2" paintOrder="stroke">2020</text>
      </>
    ),
  },
  {
    name: 'Ansys Workbench',
    art: (
      <>
        <rect width="24" height="24" rx="3" fill="#f6bd12" />
        <path d="M8 1H14L24 24H17L11 8 6 24H0Z" fill="#1c1c1c" />
        <path d="M11 8 17 24H6Z" fill="#f8cf40" />
      </>
    ),
  },
  {
    name: 'DesignModeler',
    art: (
      <>
        <circle cx="12" cy="12" r="11.500" fill="#18c828" stroke="#0c7a16" />
        <text x="3" y="16.500" fontSize="12" fontWeight="bold" fontFamily="Liberation Sans" fill="#fff" stroke="#123" strokeWidth="1.600" paintOrder="stroke">DM</text>
      </>
    ),
  },
];

function Taskbar() {
  return (
    <nav className="flex h-[34px] shrink-0 items-center bg-[#eeeeee]">
      {taskIcons.map((t) => (
        <button key={t.name} aria-label={t.name} className={`flex h-full w-[49px] items-center justify-center pt-[2px] ${t.active ? 'bg-[#f9f9f9]' : ''}`}>
          <svg viewBox="0 0 24 24" className="h-6 w-6 overflow-visible">{t.art}</svg>
        </button>
      ))}
      <div className="flex-1" />
      <div className="flex items-center gap-2 pt-[2px] text-[#111]">
        <ChevronUp size={18} strokeWidth={1.5} />
        <Wifi size={16} strokeWidth={1.5} className="-rotate-45" />
        <svg viewBox="0 0 16 10" className="h-2.5 w-4">
          <path d="M0.500 1.500H13.500V8.500H0.500ZM15 3.500V6.500" fill="none" stroke="#111" />
          <path d="M2 3H7V7H2Z" fill="#111" />
        </svg>
        <Volume2 size={17} strokeWidth={1.5} />
        <span className="w-7 text-center">TUR</span>
        <div className="w-[60px] text-center leading-[17px]">
          <p>14:01</p>
          <p>27.05.2020</p>
        </div>
        <svg viewBox="0 0 28 24" className="ml-[6px] mr-2.5 h-6 w-7">
          <path d="M1 2H18V15H9L5 19V15H1Z" fill="#000" />
          <path d="M4 6H15M4 9H15M4 12H11" stroke="#eee" />
          <circle cx="17" cy="16" r="7" fill="#d6d6d6" stroke="#777" />
          <text x="14" y="20" fontSize="11" fontFamily="Open Sans">8</text>
        </svg>
      </div>
    </nav>
  );
}

export default function App() {
  return (
    <div className="flex h-screen min-h-[658px] flex-col overflow-hidden bg-[#f0f0f0] font-['Open_Sans',sans-serif] text-[11px] text-black">
      <TopToolbar />
      <ResultToolbar />
      <main className="flex flex-1 bg-[#f6f8fb]">
        <aside className="flex w-[347px] shrink-0 flex-col gap-[6px] bg-[#f0f0f0]">
          <OutlinePanel />
          <DetailsPanel />
          <SectionPlanes />
        </aside>
        <div className="ml-[6px] flex min-w-0 flex-1 flex-col">
          <Viewport />
          <ViewTabs />
          <div className="mt-[7px] flex gap-1">
            <MessagesPanel />
            <TabularPanel />
          </div>
        </div>
      </main>
      <StatusBar />
      <Taskbar />
    </div>
  );
}
